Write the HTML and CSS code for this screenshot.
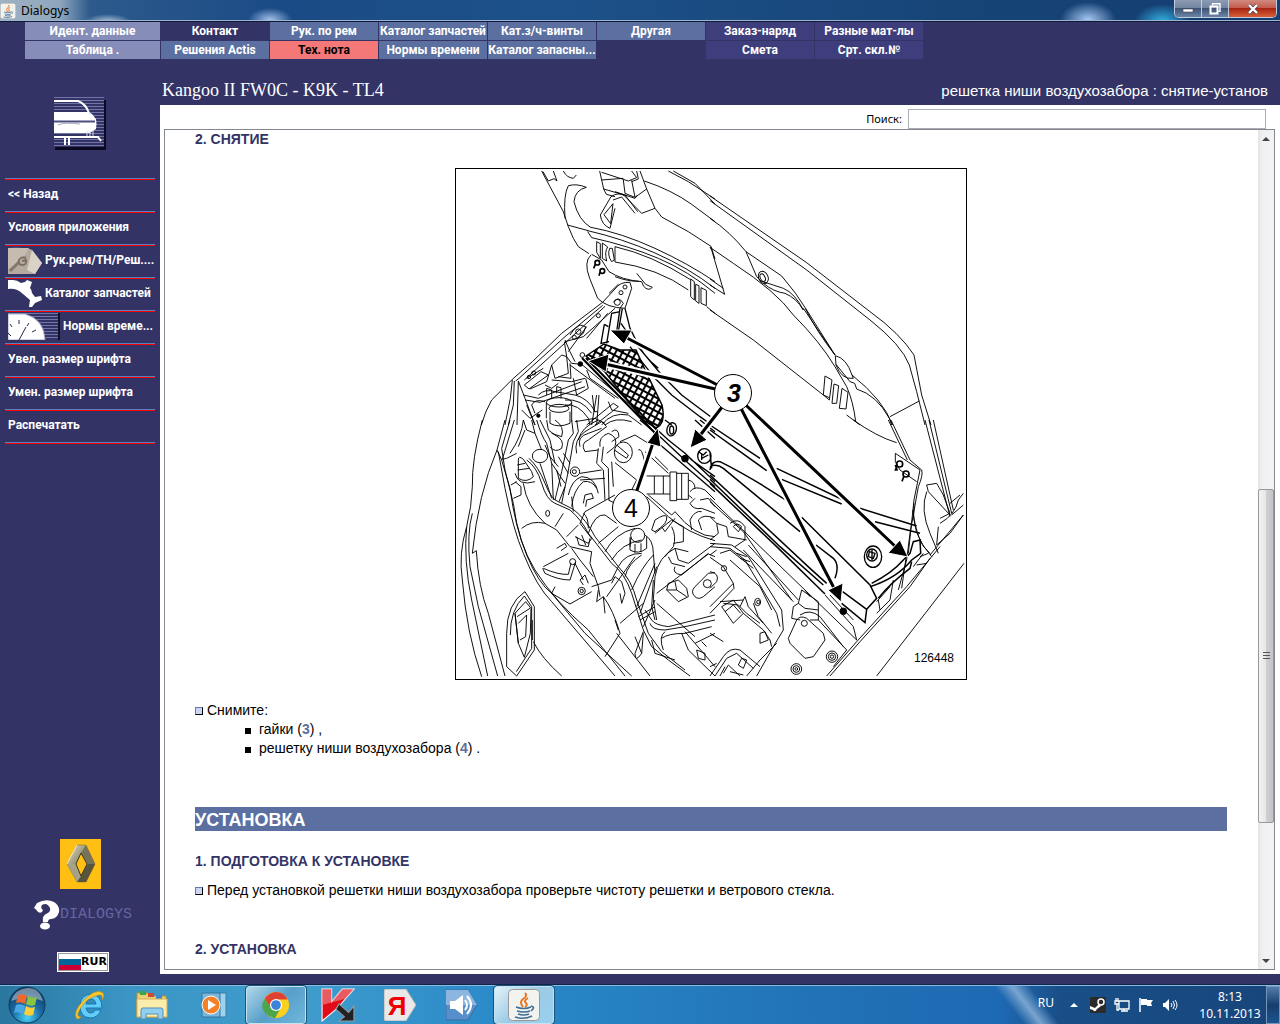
FILE: index.html
```html
<!DOCTYPE html>
<html lang="ru">
<head>
<meta charset="utf-8">
<title>Dialogys</title>
<link rel="stylesheet" href="styles.css">
</head>
<body>
<header class="titlebar">
  <svg class="java-icon" viewBox="0 0 32 32" width="16" height="16" aria-hidden="true"><use href="#java"/></svg>
  <span class="titlebar-name">Dialogys</span>
  <div class="window-buttons">
    <button class="wb" aria-label="Свернуть"><svg viewBox="0 0 12 12" width="12" height="12"><rect x="1" y="6" width="10" height="3" fill="#fff" stroke="#445" stroke-width=".6"/></svg></button>
    <button class="wb" aria-label="Развернуть"><svg viewBox="0 0 12 12" width="12" height="12"><path d="M3.500 2.500V.8h7.500v7.500H9.500" fill="none" stroke="#fff" stroke-width="1.400"/><rect x="1.500" y="3.500" width="7" height="7" fill="none" stroke="#fff" stroke-width="2"/></svg></button>
    <button class="wb wb-close" aria-label="Закрыть"><svg viewBox="0 0 12 12" width="12" height="12"><path d="M2 2l8 8M10 2l-8 8" stroke="#445" stroke-width="3.600"/><path d="M2 2l8 8M10 2l-8 8" stroke="#fff" stroke-width="2.400"/></svg></button>
  </div>
</header>

<nav class="tabs">
  <button class="tab ident">Идент. данные</button>
  <button class="tab plain">Контакт</button>
  <button class="tab">Рук. по рем</button>
  <button class="tab">Каталог запчастей</button>
  <button class="tab">Кат.з/ч-винты</button>
  <button class="tab">Другая</button>
  <button class="tab order">Заказ-наряд</button>
  <button class="tab order">Разные мат-лы</button>
  <button class="tab ident">Таблица .</button>
  <button class="tab">Решения Actis</button>
  <button class="tab active">Тех. нота</button>
  <button class="tab">Нормы времени</button>
  <button class="tab">Каталог запасны...</button>
  <span></span>
  <button class="tab order">Смета</button>
  <button class="tab order">Срт. скл.№</button>
</nav>

<div class="workspace">
  <aside class="sidebar">
    <svg class="car-badge" viewBox="0 0 52 53" width="52" height="53" aria-hidden="true">
      <defs><pattern id="lines" width="4" height="3" patternUnits="userSpaceOnUse"><rect width="4" height="3" fill="#333366"/><rect width="4" height="1" fill="#7076a8"/></pattern></defs>
      <path d="M1 3h51v50H1z" fill="#0a0a20"/><rect width="50" height="50" fill="url(#lines)"/>
      <path d="M0 15h34l4 2 4 5q1 5 0 10l-6 4H0z" fill="#fff"/>
      <path d="M0 4h24q8 3 11 12" fill="none" stroke="#fff" stroke-width="2"/>
      <path d="M0 24.500h41" stroke="#4a4e80" stroke-width="2"/><path d="M4 28q6-3 22-1" fill="none" stroke="#aab"/>
      <path d="M33 34v6M36 34v6M39 33v6" stroke="#d8d8e8"/>
      <path d="M0 40h44l3 4" fill="none" stroke="#fff" stroke-width="2"/><path d="M11 40v8M15 40v8" stroke="#fff" stroke-width="2"/>
    </svg>
    <nav class="menu">
      <button>&lt;&lt; Назад</button>
      <button>Условия приложения</button>
      <button><svg viewBox="0 0 34 27" width="34" height="27" aria-hidden="true"><path d="M0 1q12-1 22 1l2 1 10 13-7 11H0z" fill="#b5aa9e"/><path d="M0 1h21l-7 12L0 22z" fill="#c6bbb0"/><path d="M24 3l10 13-7 11-8-4z" fill="#d9d2c6"/><path d="M2 24l9-9" stroke="#83766a" stroke-width="3"/><path d="M18 11q-4-2-7 2-1 5 3 5 5 0 4-5l-4 1" fill="none" stroke="#7d6f63" stroke-width="2"/></svg>Рук.рем/ТН/Реш....</button>
      <button><svg viewBox="0 0 34 27" width="34" height="27" aria-hidden="true"><path d="M0 0h5q4 0 8 3l4-1 2-2 5 2-2 6q2 2 2 5l3 4 6-1 1 4-7 3-3 4h-3l1-7-7-6Q9 8 0 9z" fill="#fff"/></svg>Каталог запчастей</button>
      <button><svg viewBox="0 0 52 27" width="52" height="27" aria-hidden="true"><rect width="52" height="27" fill="url(#lines)"/><path d="M50 0h2v27h-2z" fill="#111128"/><path d="M0 1h17q19 5 20 26H0z" fill="#fff" stroke="#a4a7c0"/><path d="M11 27l7-13M11 7v4M21 10l-2 3M28 17l-4 2M2 11l2 3M0 20l3 3" stroke="#26264e"/></svg>Нормы време...</button>
      <button>Увел. размер шрифта</button>
      <button>Умен. размер шрифта</button>
      <button>Распечатать</button>
    </nav>
    <div class="brand">
      <svg viewBox="0 0 41 50" width="41" height="50" aria-label="Renault" role="img">
        <defs><linearGradient id="dm" x2="1" y2="1"><stop stop-color="#e4e2d0"/><stop offset=".45" stop-color="#8e8a6c"/><stop offset="1" stop-color="#4d4934"/></linearGradient></defs>
        <rect width="41" height="50" fill="#ffc013"/>
        <path d="M17 6h9l9 19-9 18h-9L7 25z" fill="url(#dm)" stroke="#8b7a20" stroke-width=".6"/>
        <path d="M26 6l9 19h-7l-7-11z" fill="#77735a"/><path d="M35 25l-9 18h-9l4-6 7-12z" fill="#59553c"/><path d="M7 25h9l5 12-4 6z" fill="#a5a286"/>
        <path d="M21 14l6 11-6 12-5-12z" fill="#ffc013" stroke="#3d3618"/><path d="M17 6L7 25" stroke="#f4f2e0"/>
      </svg>
      <div class="product">
        <svg viewBox="0 0 26 30" width="26" height="30" aria-hidden="true"><path fill="#fff" fill-rule="evenodd" d="M0 8L3 3Q12-2 20 2q6 4 5 10-2 7-8 7-3 0-3 3H9q-1-6 3-8 5-2 4-6-3-6-8-3-2 3 1 5-1 4-5 2Q2 9 0 8z"/><ellipse cx="11" cy="26" rx="5" ry="3.600" fill="#fff"/></svg>
        <span>DIALOGYS</span>
      </div>
      <button class="currency"><i class="flag"></i>RUR</button>
    </div>
  </aside>

  <main class="main">
    <div class="doc-head"><h1>Kangoo II FW0C - K9K - TL4</h1><p>решетка ниши воздухозабора : снятие-установ</p></div>
    <div class="sheet">
      <form class="search"><label for="q">Поиск:</label><input id="q" type="text"></form>
      <div class="frame">
        <article class="doc">
          <h3>2. СНЯТИЕ</h3>
          <figure>
            <svg viewBox="456 169 510 510" width="510" height="510" role="img" aria-label="Моторный отсек">
              <defs><pattern id="mesh" width="6" height="6" patternUnits="userSpaceOnUse" patternTransform="rotate(28)"><rect width="6" height="6" fill="#fff"/><path d="M0 1h6M1 0v6" stroke="#000" stroke-width="1.900"/></pattern></defs>
              <g fill="none" stroke="#000">
                <!-- Bonnet, hinge and left apron -->
                <g transform="translate(455 165) scale(.333333)" stroke-width="2.800">
                  <path d="M260 18L285 65 325 140 340 185 355 220 370 245 402 266M264 20L280 48 297 41 306 48 295 18M325 18Q335 38 355 40L364 30M330 160Q325 90 340 62 365 55 394 67 360 75 357 110 370 165 408 188M337 180L400 197"/>
                  <path d="M408 187Q500 204 600 250T780 350M398 197Q500 220 600 264T780 370M398 200L410 218Q520 242 610 280T780 385M480 245Q590 270 705 343M480 291Q610 310 700 375M480 245V291M755 425L780 445"/>
                  <path d="M425 230V262L436 280V236ZM442 234V280L455 288Q448 260 458 246ZM464 250Q456 270 470 290L478 285 472 250ZM707 342V395L718 405V350ZM722 358V408L732 415V362ZM738 368V415L754 422V376Z"/>
                  <path d="M434 18L440 45 446 72 515 92M440 22L520 48 545 38 530 18M440 45L505 40M505 45L510 85 540 97 530 46M545 18L550 42 530 50M446 72L454 88 480 95"/>
                  <path d="M436 150L468 95Q490 80 508 92L560 145 600 130M436 150Q440 180 465 190L480 130M447 149L467 176 474 116ZM474 105L500 96 540 145M510 90L548 140M540 97L575 72 600 130M575 72L565 45 555 18M480 80L540 100 548 90"/>
                  <path d="M568 48Q650 75 710 118L780 170M600 130L620 156 700 200 768 244 780 282M640 18L700 50 780 102M655 18L720 55 780 117"/>
                  <path d="M408 270Q385 290 404 340L428 400Q455 428 510 430L530 370 525 352Q495 350 480 372L440 415M410 268L440 285 462 320Q500 345 560 350L566 364Q580 380 592 367L572 358 545 325M480 335Q520 350 552 349M462 385L490 358M475 412Q490 390 505 415L495 430"/>
                  <circle cx="510" cy="366" r="6"/><circle cx="498" cy="383" r="6"/><circle cx="487" cy="412" r="9"/><circle cx="430" cy="452" r="6"/><circle cx="382" cy="570" r="7"/>
                  <g stroke-width="5"><circle cx="427" cy="293" r="7"/><circle cx="442" cy="318" r="7"/><path d="M421 298L416 310M435 322L432 332"/></g>
                  <path d="M440 414L320 505 232 590 172 643 110 705Q90 740 79 780M443 421L330 515 192 640M450 424L340 525 208 645M172 645L166 700 150 780M178 648L175 720 160 780M190 648L186 780M190 648L210 700 240 780M182 648L192 640M480 430L385 515 330 530M330 525L345 560 360 590M328 530L335 575 350 595 380 598M395 485L340 560M458 445L395 520"/>
                  <circle cx="358" cy="517" r="6"/><circle cx="370" cy="500" r="8"/><path d="M345 510Q355 490 375 480L392 485 385 505 365 520M215 640L265 610M208 660L258 620 280 630 222 672ZM225 672L275 650 290 600 320 570 335 575 340 625 300 640 290 600M345 595L348 640 310 635"/>
                  <circle cx="222" cy="636" r="5"/><circle cx="236" cy="624" r="6"/>
                  <path d="M290 645L350 650 390 640M205 690L250 700 380 650M210 705L255 712 390 665M345 600L480 700M380 598L520 715 600 780M395 615L405 640 490 700M410 780L425 690M425 780L432 690M395 780L475 715 490 725 420 780M215 720L240 780M250 690Q270 670 300 680L360 690Q400 700 420 740M330 705Q380 700 410 745M240 745L230 720Q240 700 270 710"/>
                  <path d="M355 640L365 690 400 670 392 640M412 690L418 740 428 740M200 735L225 760 262 735M330 720Q370 715 400 760L405 780M440 780Q470 740 520 750L560 780M450 780Q480 755 530 770M270 660L290 670 310 655M460 710L470 735 520 745"/>
                  <ellipse cx="312" cy="712" rx="38" ry="14"/><ellipse cx="312" cy="730" rx="30" ry="12"/><path d="M274 712V760M350 712V770M285 740V775Q310 790 345 775V740M275 690V670L290 675V700M305 685V665L318 668V700"/>
                  <circle cx="250" cy="752" r="5" fill="#000"/><circle cx="376" cy="597" r="7" fill="#000"/>
                  <g stroke-width="4"><path d="M495 430L485 500M502 430L490 500M510 430L525 490 540 520M495 440L470 445 455 535M448 478L438 535 462 530M448 478L460 485M498 475L515 500M525 545L600 640 650 690 735 755 770 780M545 540L620 630 680 690 780 765M540 520Q560 570 610 610"/></g>
                </g>
                <!-- Right half of the bonnet -->
                <g transform="translate(710 165) scale(.333333)" stroke-width="2.800">
                  <path d="M0 93L290 293 480 440Q570 505 612 570L635 690 663 780M0 107L290 315 480 465Q575 540 598 600L620 680 645 780M0 160Q60 200 108 260L215 333Q260 385 290 435L375 570M108 260L140 335Q150 350 170 355M0 247L70 295Q200 380 250 450 330 530 375 605L410 665Q430 710 437 770M0 247L5 255 44 388 0 360M0 342L40 370M0 435L130 525 340 690M165 352Q190 360 220 370 255 385 280 435M160 355Q190 380 225 385 260 400 280 435M280 430L375 570M286 430Q320 500 375 570M376 572Q410 580 426 630L430 640Q395 645 378 600ZM378 598L420 650 434 655 440 672Q500 690 538 760L545 780M426 630Q520 705 548 780M540 755L628 708M410 750L450 780"/>
                  <path d="M345 633L340 690 358 705 366 645ZM372 657L366 715 380 715 386 662ZM396 670L388 730 408 732 414 682ZM340 690L358 698"/><ellipse cx="160" cy="337" rx="14" ry="19" transform="rotate(-25 160 337)"/><ellipse cx="158" cy="338" rx="7" ry="12" transform="rotate(-25 158 338)"/>
                </g>
                <!-- Wing and engine bay -->
                <g transform="translate(455 420) scale(.333333)" stroke-width="2.800">
                  <path d="M82 0Q50 120 52 200 50 260 35 320 10 400 22 480 35 640 80 770M35 320Q25 420 50 540L98 768M126 90Q70 220 52 400L64 392Q70 500 100 580L150 768M52 280Q35 340 45 440L70 560 128 768M150 0L126 90 140 120 165 205Q180 320 215 405 250 490 290 520L390 640 530 768M165 0L140 85 150 150 175 250Q190 370 240 450 300 545 400 630L510 768M130 95L150 205Q175 330 205 400 245 500 290 545L480 768M178 0L142 118 155 115 185 100"/>
                  <path d="M155 640Q155 550 210 515L238 560V690L185 768 155 740ZM166 645Q165 570 208 528L230 560V685L184 755M180 580L212 545 228 565 226 640 208 712 190 670ZM186 590L225 565M190 610L215 585 212 650 195 660M235 665Q260 715 320 768M232 600V660M180 580L190 670"/>
                  <path d="M190 120Q190 105 205 118L230 155 235 170Q215 190 190 175ZM187 135L210 130M188 150L222 145M180 160Q190 200 240 185M168 195L185 185M175 235L198 225V200L180 185"/><ellipse cx="255" cy="108" rx="23" ry="20"/><path d="M215 120Q245 140 260 190T300 250L345 270Q380 300 400 340L470 430Q510 460 530 520L565 630 590 680 640 720 705 768M222 115Q250 140 270 190T310 245L355 268Q395 300 420 350L490 440Q530 480 545 540L580 640 620 695 690 750M205 0L215 30 240 40 230 0M205 0Q200 50 165 100M240 40L260 90M200 325Q230 300 270 310L305 330 345 380M205 190Q215 260 270 310"/>
                  <ellipse cx="278" cy="280" rx="6" ry="9"/><path d="M300 320L325 280M335 350L370 315M265 440L340 400M263 445L270 460Q310 480 345 480L362 425M265 445Q310 465 340 463L348 430M305 385L330 370 335 380 318 392M300 500L290 520 345 552 410 515M345 380L410 395 405 430 430 500 435 530M350 385L375 420 415 470M360 430L385 480"/><circle cx="353" cy="425" r="9"/><circle cx="380" cy="513" r="11"/><circle cx="380" cy="513" r="5"/><path d="M385 495L375 480 390 465 400 490M430 510L425 545 445 530 450 580M445 530Q475 570 495 640L450 710M490 630L480 600M485 640L585 768M495 610L565 550M410 500L470 480 490 440"/>
                  <path d="M400 340Q420 280 450 285L485 310M430 370L490 320M450 395Q480 340 540 325M470 420Q500 370 560 360M490 440Q510 400 560 400M510 470Q520 430 560 405M530 510Q560 440 595 405M545 560L600 430M555 580L605 440M565 620L600 540M390 275L480 225M390 275L375 310 410 355 400 370 360 350M385 280Q400 290 400 325"/><circle cx="548" cy="346" r="21"/><path d="M525 352V390Q550 405 575 385V350M540 372V398M558 370V395M570 345Q595 360 595 400L600 460M525 380L528 352"/>
                  <path d="M245 0Q260 50 275 70L290 130 295 240M255 0L285 60 300 130M275 0L280 30 300 45Q330 60 320 85 300 100 285 80M300 0Q330 20 320 50L290 40M350 0L355 40 340 60Q320 160 300 240M365 0L370 35 355 65Q340 160 320 250M370 60Q380 20 430 0M365 100Q355 60 390 35L440 5 455 20 400 60Q375 70 390 95L430 90M435 80Q430 50 460 40 490 50 480 80L455 100M430 85L425 130 445 150 450 240M445 80L440 125 460 145 462 240M375 160L440 150M375 180L450 175M340 225Q350 180 380 170 420 170 430 220M350 260Q355 210 385 185 410 180 425 205M385 250L390 225 410 220 415 235 395 240 392 260M350 230L355 275M290 130L330 190M310 110L340 160M325 100L345 130"/><circle cx="360" cy="155" r="14"/><circle cx="358" cy="155" r="6"/><ellipse cx="505" cy="97" rx="27" ry="31"/><path d="M485 75L520 105 515 115 478 90M480 128L545 180 530 210M470 125L475 200M470 35Q490 20 492 50L470 65M495 65L540 45 580 70M550 90Q560 80 570 130M570 95L640 160M600 110L640 150M480 240L490 225M460 240L500 260"/>
                  <path d="M360 5L420 -5 450 10M375 80Q365 50 400 40L440 25M270 75L285 110 310 140M255 130L275 190 290 235M330 200L312 245M305 150L318 200M365 350L372 375 400 380 405 355M380 345L392 375M455 530L540 410M470 490L480 470 500 485 510 520 500 550 495 520M570 570L590 600M540 650L560 700M210 30L190 80"/>
                  <path d="M575 168H645M575 222H645M598 168V222M625 168V222M645 156H665V242H645ZM680 160V238M665 160H700V238H665M700 180Q720 185 720 205M700 225L712 235M575 230L640 290Q700 340 780 362M580 225L650 285 660 275Q720 350 780 350M705 215Q720 195 750 210L780 240M720 235L705 250Q715 270 740 265L780 280M735 240L760 235 780 260M740 330L730 300Q745 280 780 295M710 330L705 300Q720 270 740 275"/>
                  <path d="M590 330L600 300Q630 280 635 290 640 310 600 335ZM620 320L630 335 660 295M600 340L650 300 685 320V365L655 370M630 410L655 380Q665 350 650 320M605 600L595 540 600 470Q610 410 660 385L700 395M600 600L590 560 595 480M660 385L670 420 700 430 780 370M640 410L650 430 690 440M660 440Q650 460 680 465L760 400M605 520L760 402 780 410M605 550L720 650M640 490L670 480 695 505 700 530 670 545 635 510ZM660 485L665 510 695 530M635 510L665 510"/>
                  <path d="M720 530Q705 515 720 500L760 460 780 458M720 530Q730 540 745 530L780 500"/><circle cx="757" cy="491" r="12"/><path d="M585 610Q590 630 630 630L690 620 780 600M590 600Q600 615 640 620L780 585M620 655Q640 640 690 640L770 620M625 690Q610 650 630 635M680 640L700 690 780 768M690 635L720 670 780 740M565 640L560 700Q540 730 540 700L565 635M590 660L600 700 660 720M550 590L600 560M555 600L600 575M720 670L780 640M725 690L750 700 750 720 730 715ZM740 665L755 680"/>
                  <g stroke-width="4"><path d="M555 0L620 55 700 130 780 200M575 0L640 60 690 100 780 185M610 70L780 215M690 100L710 120 780 170M630 0L650 15M720 0L780 55M735 0L780 35"/><ellipse cx="650" cy="28" rx="14" ry="20" transform="rotate(15 650 28)"/><ellipse cx="650" cy="30" rx="6" ry="12"/><ellipse cx="748" cy="108" rx="20" ry="22"/><path d="M730 95L745 105 755 95M740 115L760 105M740 100V120M600 0L605 15 620 5"/></g><circle cx="690" cy="116" r="10" fill="#000"/>
                </g>
                <!-- Scuttle, right wing and battery tray -->
                <g transform="translate(710 420) scale(.333333)" stroke-width="2.800">
                  <g stroke-width="4.500"><path d="M0 15L150 115M0 30L170 152M200 145L400 240M215 178L395 252M450 265L620 318M495 305L630 340M0 150Q5 120 30 125 130 175 250 255M0 140Q20 130 40 145L270 335M275 292L480 495 500 535 470 568M318 375L370 415Q390 435 375 475M0 165L300 445 350 490M0 178L210 380 340 495M0 190L200 380 345 522M398 515L470 568 465 608 395 550M480 500Q560 475 605 420L632 400 630 360 610 365 600 400 580 420M485 490Q545 460 580 420M505 535Q540 490 600 445L605 425M0 100L5 145"/></g>
                  <ellipse cx="489" cy="410" rx="26" ry="32" stroke-width="4"/><ellipse cx="486" cy="405" rx="16" ry="18" stroke-width="4"/><path d="M478 395L495 400 490 415 475 410ZM486 390V420" stroke-width="4"/><circle cx="400" cy="574" r="10" fill="#000"/>
                  <path d="M430 0Q500 50 560 68M535 0L592 120M543 0L600 120 635 150Q640 165 625 200L600 340 590 420 565 510M556 100L630 150Q620 200 612 240L595 400M556 100V125L570 150 620 185M590 400L575 505M645 0L720 290M657 0L725 280M670 0L730 270M612 250Q600 340 665 410M608 270Q620 370 660 400M650 195L680 190 700 225 720 280 690 295M650 195L655 215 720 285M650 215Q630 270 660 340L685 400M685 320L680 375 720 340 760 285M690 310Q735 285 745 240L760 220M725 285L760 255M720 250L750 225M660 405L760 285"/>
                  <g stroke-width="5"><circle cx="569" cy="132" r="9"/><circle cx="588" cy="162" r="9"/><path d="M562 138L555 152M582 168L576 184M556 135L562 152"/></g>
                  <path d="M350 768L440 665 590 500 690 380M360 768L450 665 600 500 660 415M500 768L700 510 762 430M500 580L540 540 550 480M510 570L505 540M540 500L500 545M610 440L640 400M630 410L655 400M620 435L650 430"/>
                  <path d="M0 235L290 515 440 660M0 245L100 335 245 540M115 375L265 540M100 390L250 545M345 525L430 620 440 660M360 525L430 600M265 550L275 510 325 545 325 600 300 600M250 560L265 550 285 565 325 570M285 510L300 530M250 560L245 595 270 600M235 655L260 600Q270 585 290 595L340 640 345 660 310 710 285 715 240 670ZM325 600L410 690 370 740M270 585Q300 565 330 590L400 680"/><circle cx="283" cy="610" r="9"/><circle cx="366" cy="710" r="17"/><circle cx="366" cy="710" r="11"/><circle cx="366" cy="710" r="5"/><circle cx="259" cy="747" r="16"/><circle cx="259" cy="747" r="10"/><circle cx="259" cy="747" r="4"/><ellipse cx="143" cy="546" rx="9" ry="11"/><circle cx="145" cy="546" r="5"/>
                  <path d="M0 290L20 310 50 320 55 350 110 360M20 310L25 340 0 360M60 310Q85 290 105 320V360L75 380M70 320Q80 305 95 320L85 335ZM0 370L65 375 115 410 215 570 220 630 190 680 140 768M0 380L60 385 105 420 200 580 210 620M30 400L60 390 130 445M20 390L0 405M60 420L150 500 185 570M0 412L40 440 70 490 0 560M70 490L72 505 0 580M0 455Q30 460 20 485L0 505M35 560L70 540 100 580 70 610ZM45 575L70 555 92 580M30 545L100 540 105 530 115 560 160 610M40 550L85 555 110 580 150 610M100 580L160 630 180 660 185 680M150 640L165 635 175 660 150 670ZM130 550L145 590 185 640M0 768L40 710Q60 680 90 690L150 740M15 768L50 715 80 700 130 745M85 735L95 715 110 720 100 745ZM40 760L55 735 90 768M30 768L45 740M100 540L90 560M0 640L40 665M110 768L150 720 200 670M60 755L100 765M0 740L20 730M80 400L110 410M90 415L120 425"/><circle cx="42" cy="445" r="8"/>
                </g>
                <!-- Air intake grille -->
                <path d="M586 356L604 344 620 350 636 350 646 372 662 405Q666 424 656 428L643 420 605 372Z" fill="url(#mesh)" stroke-width="1.500"/>
                <path d="M582 358L655 433M586 358L658 431" stroke-width="2"/>
                <!-- Callout arrows -->
                <g stroke="#fff" stroke-width="7"><path d="M733 393L625 337M733 393L605 364M733 393L698 438M733 393L835 590M733 393L897 548M631 508L654 440"/></g>
                <g stroke-width="3"><path d="M733 393L625 337M733 393L605 364M733 393L698 438M733 393L835 590M733 393L897 548M631 508L654 440"/></g>
                <g fill="#000" stroke="#fff"><path d="M610 330L632 330 624 344ZM588 361L609 354 606 372ZM690 448L695 429 707 440ZM841 602L828 590 843 583ZM908 557L888 553 900 540ZM658 428L661 447 647 443Z"/></g>
                <circle cx="733" cy="393" r="18.500" fill="#fff"/><circle cx="631" cy="508" r="18.500" fill="#fff"/>
              </g>
              <text x="734" y="402" class="call call-main">3</text><text x="631" y="517" class="call">4</text><text x="934" y="662" class="fig-no">126448</text>
            </svg>
          </figure>
          <p class="step"><i class="box"></i>Снимите:</p>
          <ul><li>гайки (<a href="#p3">3</a>) ,</li><li>решетку ниши воздухозабора (<a href="#p4">4</a>) .</li></ul>
          <h2>УСТАНОВКА</h2>
          <h3>1. ПОДГОТОВКА К УСТАНОВКЕ</h3>
          <p class="step"><i class="box"></i>Перед установкой решетки ниши воздухозабора проверьте чистоту решетки и ветрового стекла.</p>
          <h3 class="next">2. УСТАНОВКА</h3>
        </article>
        <div class="scrollbar" aria-hidden="true"><i class="arrow up"></i><i></i><b><i></i><i></i><i></i></b><i></i><i class="arrow down"></i></div>
      </div>
    </div>
  </main>
</div>

<footer class="taskbar">
  <button class="start" aria-label="Пуск"><svg viewBox="0 0 38 38" width="38" height="38"><defs><radialGradient id="orb" cx=".5" cy=".85" r=".8"><stop stop-color="#49d2f5"/><stop offset=".5" stop-color="#1c6ba4"/><stop offset="1" stop-color="#123a61"/></radialGradient></defs><circle cx="19" cy="19" r="18" fill="url(#orb)" stroke="#0c3a5e"/><path d="M3 15Q7 3 19 2t16 13Q19 8 3 15z" fill="#fff" opacity=".4"/><path d="M10 9q5-2 9 1l-2 8q-4-3-9-1z" fill="#f0682c"/><path d="M20 10q4 3 9 1l-2 8q-5 2-9-1z" fill="#8ac53f"/><path d="M8 19q4-2 9 1l-2 8q-5-3-9-1z" fill="#4aa8e8"/><path d="M18 20q4 3 9 1l-2 8q-5 2-9-1z" fill="#fbce3a"/></svg></button>
  <button class="task" aria-label="Internet Explorer"><svg viewBox="0 0 32 32" width="32" height="32"><path d="M27 21q-3 8-11 8Q6 28 6 17T17 5q11 1 11 14H12q1 5 5 5 3 0 4-3zM12 15h10q-1-5-5-5t-5 5z" fill="#62cdf7" stroke="#1576b8"/><path d="M3 30Q-2 23 10 11T29 4q2 3-1 7 1-6-3-5Q13 8 6 20q-5 8 1 8-2 2-4 2z" fill="#fbc92d" stroke="#c98b08" stroke-width=".6"/></svg></button>
  <button class="task" aria-label="Проводник"><svg viewBox="0 0 32 32" width="32" height="32"><path d="M1 4h11l2 3h16v21H1z" fill="#edcf75" stroke="#b98e32"/><path d="M4 2h6v4H4z" fill="#3ba34b"/><path d="M12 4h6v4h-6z" fill="#cf4931"/><path d="M20 6h6v4h-6z" fill="#348bd1"/><path d="M1 10h30v18H1z" fill="#faecaa" stroke="#d3b05a"/><path d="M5 30v-9q0-2 2-2h18q2 0 2 2v9h-5v-5H10v5z" fill="#91cff0" stroke="#568fb6"/></svg></button>
  <button class="task" aria-label="Проигрыватель"><svg viewBox="0 0 32 32" width="32" height="32"><path d="M20 4h8v24h-8z" fill="#9ed1ed" stroke="#397ea6"/><path d="M4 4h18v24H4z" fill="#79b6da" stroke="#3377a4"/><circle cx="13" cy="16" r="9" fill="#f58025" stroke="#fff"/><path d="M10 11l8 5-8 5z" fill="#fff"/></svg></button>
  <button class="task open" aria-label="Chrome"><svg viewBox="0 0 32 32" width="30" height="30"><circle cx="16" cy="16" r="14" fill="#fcd01e"/><path d="M4 9Q9 2 16 2q9 0 12.500 8H16L10 19z" fill="#df4232"/><path d="M4 9q-6 9 1 16 4 4 10 5l6-11-11-1z" fill="#4da64b"/><circle cx="16" cy="16" r="6.500" fill="#fff"/><circle cx="16" cy="16" r="5.200" fill="#3b82d8"/></svg></button>
  <button class="task" aria-label="Kaspersky"><svg viewBox="0 0 32 32" width="34" height="34"><path d="M1 1h9v12L20 1h11L18 16l-5 5L1 31z" fill="#e20c19" stroke="#fff"/><path d="M1 1h9v12L20 1h11l-8 9L1 16z" fill="#ee7c80" opacity=".7"/><path d="M17 15l9 8 5-6v14H17l5-4-8-7z" fill="#222" stroke="#999"/></svg></button>
  <button class="task" aria-label="Яндекс"><svg viewBox="0 0 32 32" width="32" height="32"><path d="M2 0h20l10 16-10 16H2q-2 0-2-2V2q0-2 2-2z" fill="#e9e9e9" stroke="#b4b4b4"/><text x="13" y="26" class="ya">Я</text></svg></button>
  <button class="task" aria-label="Звук"><svg viewBox="0 0 32 32" width="32" height="32"><path d="M0 1h22l9 15-9 15H0z" fill="#578fcb" stroke="#386ca5"/><path d="M0 1h22l9 15H0z" fill="#8cb5df"/><path d="M4 12h5l8-6v20l-8-6H4z" fill="#fff"/><path d="M19 11q4 5 0 10M21 7q8 9 0 18" fill="none" stroke="#fff" stroke-width="2"/></svg></button>
  <button class="task open java" aria-label="Dialogys"><svg viewBox="0 0 32 32" width="32" height="32"><g id="java"><rect x=".5" y=".5" width="31" height="31" rx="4" fill="#f2f2ef" stroke="#999"/><path d="M17 4q3 3-2 6-4 3 0 8M20 9q-5 3-2 5 2 2-1 4" fill="none" stroke="#e67522" stroke-width="2"/><path d="M8 18q8 3 15 0M9 22q7 2 13 0M10 25q6 2 11 0M7 28q9 3 17-1M23 17q5 1 0 5" fill="none" stroke="#3f6f94" stroke-width="1.600"/></g></svg></button>
  <div class="tray">
    <span class="lang">RU</span>
    <svg viewBox="0 0 8 4" width="8" height="4" aria-hidden="true"><path d="M0 4l4-4 4 4z" fill="#fff"/></svg>
    <svg class="steam" viewBox="0 0 16 16" width="16" height="16" aria-hidden="true"><rect width="16" height="16" rx="1" fill="#2b2b2b"/><circle cx="11" cy="5" r="3" fill="none" stroke="#fff" stroke-width="1.500"/><path d="M0 9l5 2 4-4 2 2-4 3q-2 4-4 1l-3-1z" fill="#fff"/></svg>
    <svg viewBox="0 0 16 16" width="16" height="16" aria-hidden="true"><path d="M5 4h10v8H5zM7 14h7M10 12v2M2 1v3M4 1v3M1 4h4v3H1zM3 7v6h2" fill="none" stroke="#fff" stroke-width="1.300"/></svg>
    <svg viewBox="0 0 16 16" width="16" height="16" aria-hidden="true"><path d="M2 1v14" stroke="#fff" stroke-width="1.500"/><path d="M3 2h6v1h6l-2 3 1 3H9V8H3z" fill="#fff"/></svg>
    <svg viewBox="0 0 16 16" width="16" height="16" aria-hidden="true"><path d="M1 6h2l4-4v12l-4-4H1z" fill="#fff"/><path d="M9 6q2 2 0 4M11 4q3 4 0 8M13 3q4 5 0 10" fill="none" stroke="#fff"/></svg>
    <time class="clock"><span>8:13</span><span>10.11.2013</span></time>
    <button class="show-desktop" aria-label="Свернуть все окна"></button>
  </div>
</footer>
</body>
</html>
```
FILE: styles.css
```css
* { box-sizing: border-box; }
body {
  margin: 0;
  min-height: 100vh;
  display: flex;
  flex-direction: column;
  background: #333366;
  font-family: "Liberation Sans", Arial, sans-serif;
}
button { font: inherit; border: 0; padding: 0; background: none; color: inherit; }
svg { display: block; flex: none; }
h1, h2, h3, p, ul, figure { margin: 0; padding: 0; }

.titlebar {
  height: 22px;
  display: flex;
  align-items: center;
  gap: 5px;
  border-bottom: 1px solid #10183c;
  box-shadow: inset 0 -1px #9db4cf;
  background:
    radial-gradient(ellipse 24px 8px at 108px 22px, #b5c9dc, transparent),
    radial-gradient(ellipse 22px 12px at 270px 20px, #a4c2ec, transparent),
    radial-gradient(ellipse 28px 18px at 1088px 20px, #a8c8f4, transparent),
    radial-gradient(ellipse 28px 18px at 1162px 22px, #35b2e4, transparent),
    linear-gradient(90deg, #9fb2c4, #8ea6bd 60px, #2d5a8c 90px, #1b4b86 280px, #1c5189 560px, #174578 940px, #153f72 1180px);
  font: 12px/20px "Noto Sans", sans-serif;
  color: #000;
}
.titlebar-name { flex: 1; }
.window-buttons {
  display: flex;
  align-self: flex-start;
  height: 18px;
  margin-right: 3px;
  border: 1px solid #c2cbd9;
  border-top: 0;
  border-radius: 0 0 5px 5px;
  overflow: hidden;
}
.wb {
  width: 27px;
  display: grid;
  place-items: center;
  border-right: 1px solid #c2cbd9;
  background: linear-gradient(#8d9cb4, #71839f 48%, #3f5475 50%, #6c84a5);
}
.wb-close { width: 47px; border: 0; background: linear-gradient(#d08a80, #c3594b 48%, #a82512 50%, #d8603a); }

.tabs {
  display: grid;
  grid-template-columns: 135px repeat(7, 108px);
  grid-auto-rows: 18px;
  gap: 1px;
  padding-left: 25px;
}
.tab, .menu button { font: bold 12px/18px Roboto, sans-serif; color: #fff; white-space: nowrap; }
.tab { background: #5b70a0; }
.ident { background: #858db8; }
.plain { background: #333366; }
.order { background: #3e3e7d; }
.active { background: #f57878; color: #000; }

.workspace { flex: 1; display: flex; }
.sidebar { width: 160px; flex: none; display: flex; flex-direction: column; }
.car-badge { margin: 38px 0 28px 54px; }
.menu {
  margin: 0 5px;
  display: flex;
  flex-direction: column;
  border-bottom: 1px solid #f00;
}
.menu::after { content: ""; height: 1px; background: #5b80c0; }
.menu button {
  height: 33px;
  padding: 0 2px 2px 3px;
  display: flex;
  align-items: center;
  gap: 3px;
  border-top: 1px solid #5b80c0;
  box-shadow: inset 0 1px #f00;
  text-align: left;
}
.brand {
  margin-top: auto;
  padding-bottom: 12px;
  display: flex;
  flex-direction: column;
  align-items: center;
}
.product { display: flex; align-items: center; margin: 11px 0 22px 6px; font: 15px/24px "Liberation Mono", monospace; color: #6666a0; }
.currency {
  display: flex;
  align-items: center;
  width: 52px;
  height: 20px;
  margin-left: 6px;
  padding: 1px;
  border: 1px solid #fff;
  outline: 1px solid #999;
  outline-offset: -2px;
  background: #fff;
  color: #000;
  font: bold 11px/16px "DejaVu Sans", sans-serif;
}
.flag { width: 22px; height: 16px; background: linear-gradient(#fff 5px, #069 5px 11px, #c03 11px); }

.main { flex: 1; min-width: 0; display: flex; flex-direction: column; padding-bottom: 10px; }
.doc-head {
  height: 46px;
  padding: 0 12px 4px 2px;
  display: flex;
  align-items: flex-end;
  justify-content: space-between;
  color: #fff;
}
.doc-head h1 { font: 18px/22px "Liberation Serif", serif; }
.doc-head p { font-size: 15px; line-height: 20px; }
.sheet { flex: 1; display: flex; flex-direction: column; padding: 0 5px 4px 4px; background: #fff; }
.search {
  display: flex;
  justify-content: flex-end;
  align-items: flex-end;
  gap: 6px;
  height: 24px;
  padding-right: 9px;
  font: 11px/20px "Noto Sans", sans-serif;
}
.search input { width: 32.5%; height: 20px; border: 1px solid #abadb3; padding: 0 4px; }
.frame { flex: 1; display: flex; border: 1px solid #828790; }

.doc { flex: 1; padding: 0 31px 0 30px; font-size: 14px; line-height: 19px; color: #000; }
.doc h2 { margin-top: 49px; font-size: 18px; line-height: 27px; height: 24px; background: #5b70a0; color: #fff; }
.doc h3 { font-size: 14px; line-height: 19px; color: #333366; }
.doc h2 + h3 { margin: 21px 0 10px; }
.doc .next { margin-top: 40px; }
figure { width: 512px; margin: 19px auto 21px; border: 1px solid #000; }
.doc ul { padding-left: 64px; list-style: none; }
.doc li::before { content: ""; display: inline-block; width: 6px; height: 6px; margin: 0 8px 0 -14px; background: #000; }
.doc a { color: #5b70a0; font-weight: bold; text-decoration: none; }
.step { display: flex; align-items: center; gap: 4px; }
.box { width: 8px; height: 8px; background: #ccd6f4; border: 1px solid #6678a8; border-right-color: #000; border-bottom-color: #000; }
.call { font: 25px "Liberation Sans", sans-serif; text-anchor: middle; }
.call-main { font-weight: bold; font-style: italic; }
.fig-no { font: 12px "Liberation Sans", sans-serif; text-anchor: middle; }

.scrollbar {
  width: 16px;
  display: grid;
  grid-template-rows: 17px 342fr 335fr 129fr 17px;
  background: linear-gradient(90deg, #e3e3e3, #f0f0f0 4px, #f3f3f3);
}
.scrollbar b {
  border: 1px solid #979797;
  border-radius: 2px;
  background: linear-gradient(90deg, #f4f4f4, #e6e6e6 48%, #d0d0d3 50%, #c4c4c8);
  display: flex;
  flex-direction: column;
  align-items: center;
  justify-content: center;
  gap: 2px;
}
.scrollbar b i { width: 7px; height: 1px; background: #555; }
.arrow { place-self: center; border: 4px solid transparent; }
.up { border-top: 0; border-bottom-color: #444; }
.down { border-bottom: 0; border-top-color: #444; }

.taskbar {
  height: 40px;
  display: flex;
  align-items: center;
  border-top: 1px solid #10254a;
  box-shadow: inset 0 1px #8abbe0;
  background: linear-gradient(52deg, transparent 0 calc(100% - 226px), #8fb6dccc calc(100% - 212px), transparent calc(100% - 198px)),
    linear-gradient(90deg, #2a779f, #3b96c6 130px, #3f9ccc 300px, #2888c8 520px, #2172b6 820px, #1e69b3 1000px, #194f88 1060px, #17457b);
  color: #fff;
  font: 12px/17px "Noto Sans", sans-serif;
}
.start { width: 60px; padding-left: 8px; }
.task { width: 60px; height: 38px; margin-right: 2px; display: grid; place-items: center; }
.open { border: 1px solid #c5e2f2; border-radius: 3px; background: linear-gradient(135deg, #b2d7e8, #579fc9 50%, #6fb7da); outline: 1px solid #1d5279; }
.java { background: linear-gradient(135deg, #e4f2f8, #9acbe6 50%, #9ad0ee); }
.ya { font: bold 26px "Liberation Sans", sans-serif; fill: #e00; text-anchor: middle; }
.tray { margin-left: auto; height: 100%; display: flex; align-items: center; gap: 8px; }
.lang { margin: 0 8px 4px 0; }
.steam { margin-left: 4px; }
.clock { width: 80px; padding-left: 8px; display: flex; flex-direction: column; align-items: center; margin-right: -8px; }
.show-desktop { width: 14px; height: 38px; border: 1px solid #7895b8; background: linear-gradient(#537cab, #173e6e 50%, #1c558f); }
```
